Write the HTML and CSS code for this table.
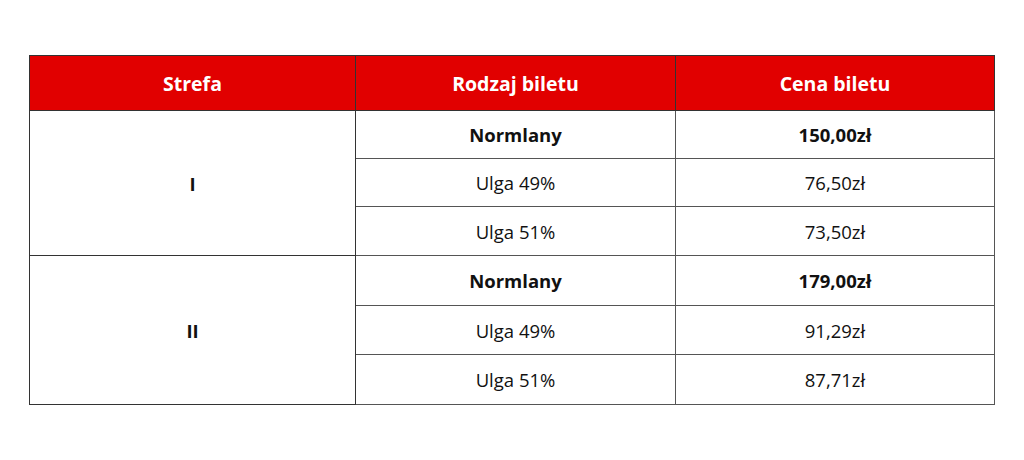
FILE: index.html
```html
<!DOCTYPE html>
<html lang="pl">
<head>
<meta charset="utf-8">
<link rel="stylesheet" href="styles.css">
</head>
<body>
<div class="page">
<table class="prices">
  <colgroup>
    <col class="c1"><col class="c2"><col class="c3">
  </colgroup>
  <thead>
    <tr><th>Strefa</th><th>Rodzaj biletu</th><th>Cena biletu</th></tr>
  </thead>
  <tbody>
    <tr class="r1"><td rowspan="3" class="zone">I</td><td class="b">Normlany</td><td class="b">150,00zł</td></tr>
    <tr class="r2"><td>Ulga 49%</td><td>76,50zł</td></tr>
    <tr class="r3"><td>Ulga 51%</td><td>73,50zł</td></tr>
    <tr class="r4"><td rowspan="3" class="zone">II</td><td class="b">Normlany</td><td class="b">179,00zł</td></tr>
    <tr class="r5"><td>Ulga 49%</td><td>91,29zł</td></tr>
    <tr class="r6"><td>Ulga 51%</td><td>87,71zł</td></tr>
  </tbody>
</table>
</div>
</body>
</html>
```

FILE: styles.css
```css
html, body { margin: 0; padding: 0; background: #fff; }
.page { padding: 55px 29px 0 29px; }
.prices {
  width: 965px;
  border-collapse: collapse;
  font-family: "Open Sans", "Noto Sans", sans-serif;
  font-size: 18.5px;
  color: #111;
  table-layout: fixed;
}
.c1 { width: 326px; }
.c2 { width: 320px; }
.c3 { width: 319px; }
.prices th {
  background: #e10000;
  color: #fff;
  font-weight: 700;
  font-size: 19.5px;
  height: 54px;
  padding: 0;
  border: 1px solid #333;
  text-align: center;
}
.prices td {
  border: 1px solid #555;
  text-align: center;
  padding: 0;
  height: 48px;
}
.prices td.b, .prices td.zone { font-weight: 700; }
.r1 td { height: 47px; }
.r2 td { height: 47px; }
.r3 td { height: 48px; }
.r4 td { height: 49px; }
.r5 td { height: 48px; }
.r6 td { height: 49px; }
.prices td.zone { border-color: #333; }
```
